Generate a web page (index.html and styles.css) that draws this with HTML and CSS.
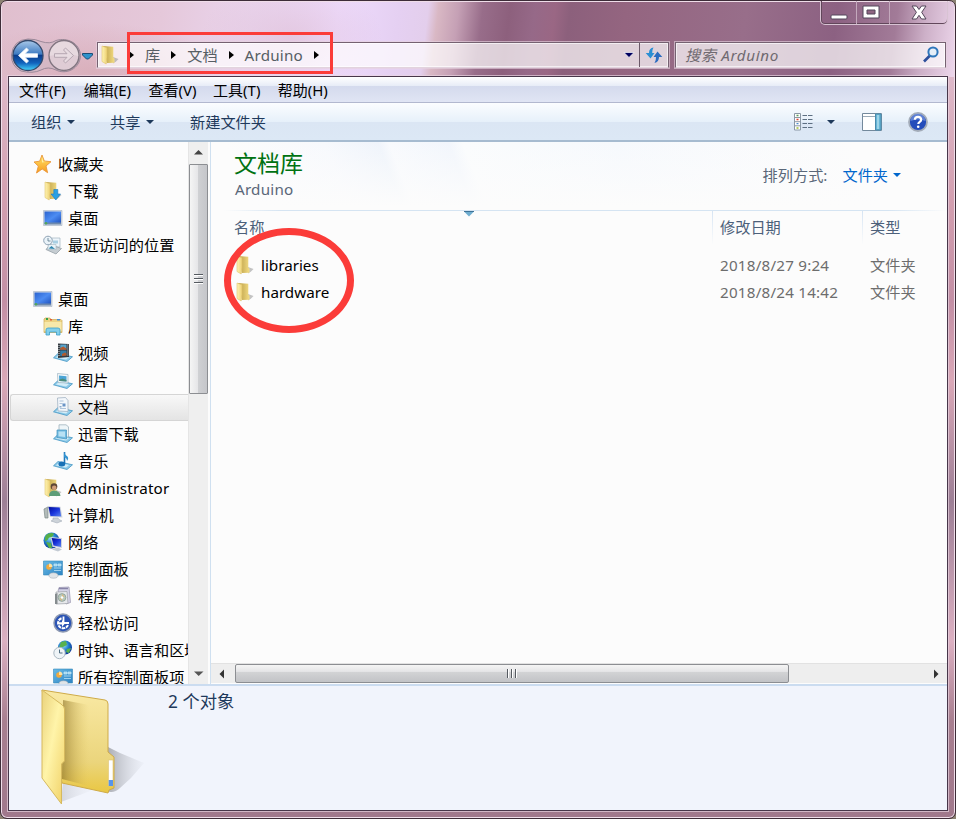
FILE: index.html
```html
<!DOCTYPE html>
<html lang="zh-CN">
<head>
<meta charset="utf-8">
<title>Arduino</title>
<link rel="stylesheet" href="styles.css">
</head>
<body>
<svg class="defs" aria-hidden="true">
  <defs>
    <linearGradient id="gFold" x1="0" x2="1"><stop offset="0" stop-color="#fff4b4"/><stop offset="1" stop-color="#edd173"/></linearGradient>
    <linearGradient id="gBack" x1="0" x2="1"><stop offset="0" stop-color="#b89c48"/><stop offset=".3" stop-color="#c9ae55"/><stop offset="1" stop-color="#f4dd84"/></linearGradient>
    <linearGradient id="gBlue" x1="0" y1="0" x2="1" y2="1"><stop offset="0" stop-color="#2b63cf"/><stop offset=".5" stop-color="#4c8cf2"/><stop offset="1" stop-color="#1e50bd"/></linearGradient>
    <linearGradient id="gNavy" x1="0" y1="0" x2="1" y2="1"><stop offset="0" stop-color="#000b9b"/><stop offset=".5" stop-color="#1a35dc"/><stop offset="1" stop-color="#5c86f0"/></linearGradient>
    <linearGradient id="gStar" x1="0" y1="0" x2="0" y2="1"><stop offset="0" stop-color="#ffe66a"/><stop offset="1" stop-color="#f89a1d"/></linearGradient>
    <linearGradient id="gPanel" x1="0" y1="0" x2="1" y2="1"><stop offset="0" stop-color="#69bbe6"/><stop offset="1" stop-color="#2d83c3"/></linearGradient>
    <radialGradient id="gGlobe" cx=".4" cy=".35" r=".7"><stop offset="0" stop-color="#8fe0f4"/><stop offset=".5" stop-color="#2380ce"/><stop offset="1" stop-color="#082c91"/></radialGradient>
    <linearGradient id="gOrb" x1="0" y1="0" x2="0" y2="1"><stop offset="0" stop-color="#a9c9e9"/><stop offset=".45" stop-color="#3f7cc2"/><stop offset=".5" stop-color="#093c8c"/><stop offset=".75" stop-color="#1263bd"/><stop offset="1" stop-color="#45d6fb"/></linearGradient>
    <linearGradient id="gShade" x1="0" x2="1"><stop offset="0" stop-color="#8d8f96" stop-opacity=".75"/><stop offset="1" stop-color="#c9ccd4" stop-opacity=".1"/></linearGradient>
    <linearGradient id="gSheen" x1="0" y1="0" x2="0" y2="1"><stop offset="0" stop-color="#f9e9a4"/><stop offset=".7" stop-color="#ebd57c"/><stop offset="1" stop-color="#e9c742"/></linearGradient>
    <linearGradient id="gInner" x1="0" x2="1"><stop offset="0" stop-color="#8e742a" stop-opacity=".65"/><stop offset="1" stop-color="#d9bd5c" stop-opacity="0"/></linearGradient>
    <linearGradient id="gFlap" x1="0" y1="0" x2="1" y2="1"><stop offset="0" stop-color="#ead27c"/><stop offset=".45" stop-color="#fff4a9"/><stop offset="1" stop-color="#f0d065"/></linearGradient>

    <symbol id="folder" viewBox="0 0 20 20">
      <path d="M13 12l5.500 2-2.500 2.500-3 2z" fill="#8a8a8a" opacity=".5"/>
      <path d="M3 1l10.300.8v10.700l1.200 1.200v4L7 18z" fill="url(#gBack)"/>
      <path d="M2 1l5 1.800v10L6.200 19 2 16.500z" fill="url(#gFold)" stroke="#dfc36c" stroke-width=".6"/>
    </symbol>
    <symbol id="star" viewBox="0 0 20 20"><path d="M9 1l2.300 6L18 7.700l-5 4.300 1.600 6.700L9.200 15l-5.700 4 1.800-6.900L1 8l5.700-.8z" fill="url(#gStar)" stroke="#e9963a" stroke-width=".9"/><path d="M9 3.500l1.500 4.300H14l-5 .8z" fill="#fff6b5" opacity=".8"/></symbol>
    <symbol id="download" viewBox="0 0 20 20"><use href="#folder"/><path d="M10.800 8.500h4V13h2.700l-4.700 6-4.700-6h2.700z" fill="#2aa0e4" stroke="#1978bd" stroke-width=".6"/></symbol>
    <symbol id="desktop" viewBox="0 0 20 20"><path d="M.5 2.500h18.500v15H.5z" fill="#d5dbe2" stroke="#a6b4c4" stroke-width=".6"/><path d="M1.500 3.500H18v12H1.500z" fill="url(#gBlue)"/><path d="M1.500 14.500H18v2H1.500z" fill="#6d89ad"/><circle cx="3" cy="15.300" r="1.300" fill="#51a55d"/></symbol>
    <symbol id="recent" viewBox="0 0 20 20"><path d="M8 3h9v9H8z" fill="#eef5fa" stroke="#a2b5c0" stroke-width=".7"/><path d="M10 5.500h5v3h-5z" fill="#a8cfe3"/><path d="M3 14.500l4-5 11.500 4-5.500 5.500z" fill="#c6cdd2" stroke="#8d989f" stroke-width=".7"/><path d="M5.500 9.500h7.500v5H4.500z" fill="#e9f3f8" stroke="#a2b5c0" stroke-width=".6"/><path d="M5.500 13.500l3-2.500 3.500 3z" fill="#2f86ae"/><circle cx="5" cy="5.500" r="4.300" fill="#e9f2f8" stroke="#8fa3b4"/><path d="M5 3v3h2.500" fill="none" stroke="#58788c" stroke-width=".8"/></symbol>
    <symbol id="library" viewBox="0 0 20 20"><path d="M1 3l1-1h5l1 1.500L18 3.500l1 1v12H1z" fill="#ecd283" stroke="#cba955" stroke-width=".7"/><path d="M3 2h2v2H3z" fill="#31a34c"/><path d="M7 3h2v1.500H7z" fill="#e35b3b"/><path d="M14 3h3v1.500h-3z" fill="#468dce"/><path d="M1.500 6h17v9h-17z" fill="#f7e8aa"/><path d="M3 19v-5q0-2 2-2h10q2 0 2 2v5h-3.500v-3h-7v3z" fill="#83cfea" stroke="#3b9fcb" stroke-width=".8"/></symbol>
    <symbol id="tray" viewBox="0 0 20 20"><path d="M.5 14.800L5 10.500l14.500 3.300L14 18.500z" fill="#8fcbe9" stroke="#4396c4" stroke-width=".8"/><path d="M3 14.500l3-2.500 10 2-3 2.500z" fill="#d3edf8"/></symbol>
    <symbol id="video" viewBox="0 0 20 20"><use href="#tray"/><path d="M5 .5l11 .5v13L5 15z" fill="#343a40"/><path d="M7.200 1.500h6.300v5H7.200z" fill="#57a3cb"/><path d="M7.200 7.500h6.300V12.500l-6.300.5z" fill="#337ea7"/><path d="M7.200 5l3-1.500 3.300 2v1.200H7.200zM9 11l3-1.500 1.500 1v2L9 13z" fill="#b35a2c"/><path d="M6 2v12M14.800 1.500v12" stroke="#cfd6da" stroke-width="1" stroke-dasharray="1 1"/></symbol>
    <symbol id="picture" viewBox="0 0 20 20"><use href="#tray"/><path d="M4.500 3.500l10.500 1v8.500L5 12.500z" fill="#f5f9fb" stroke="#9bb1c0" stroke-width=".7"/><path d="M6 5.500l7.500.7V11.500L6.300 11z" fill="#4aa4d6"/><path d="M6.300 9.500l3.500-1 3.700 1.500v1.500L6.300 11z" fill="#4c8c7c"/></symbol>
    <symbol id="document" viewBox="0 0 20 20"><use href="#tray"/><path d="M4.500 1l8-.5 2.500 3v11L5 14z" fill="#f3f7fb" stroke="#96a9bb" stroke-width=".7"/><path d="M6.500 4h4M6.500 6.500h3M7 11.500h6" stroke="#9db6d3" stroke-width=".8"/><path d="M9.500 6.500h3v3h-3z" fill="#6a94c6"/><path d="M6.500 9h2v1.500h-2z" fill="#8baccd"/></symbol>
    <symbol id="stack" viewBox="0 0 20 20"><use href="#tray"/><path d="M6 .8h7l2.500 2V13H6z" fill="#eef5f8" stroke="#95aab6" stroke-width=".7"/><path d="M4 6h9.500v9L4 13.500z" fill="#72bbe1" stroke="#4292bd" stroke-width=".7"/><path d="M5.500 7.500H12v5.500l-6.500-.7z" fill="#b8e1f4"/></symbol>
    <symbol id="music" viewBox="0 0 20 20"><use href="#tray"/><path d="M11.500 1v12" stroke="#2277b8" stroke-width="1.600"/><path d="M11 1q1 3 3.500 4.500 1.500 2-.5 4.500 0-3-3-4z" fill="#3293d1"/><ellipse cx="8.800" cy="13" rx="3.400" ry="2.500" fill="#1971b6"/></symbol>
    <symbol id="user" viewBox="0 0 20 20"><use href="#folder"/><circle cx="11" cy="8.500" r="3.300" fill="#5d4636"/><circle cx="11.200" cy="9.800" r="2.300" fill="#cf9d78"/><path d="M6 18q0-5 5-5.500 6 .5 6.500 5.500z" fill="#5d9d78"/></symbol>
    <symbol id="computer" viewBox="0 0 20 20"><path d="M1 4l4-2v11H2z" fill="#b2bbb9" stroke="#7c8988" stroke-width=".7"/><path d="M4.500 1l13 .8 2 10.700L7 12z" fill="#cfd5dd"/><path d="M5.500 2l11.200.6 1.500 9L7.500 11z" fill="url(#gNavy)"/><path d="M10 13h5l1 1.500 3 1.500-5 2-6-2 2-1z" fill="#cdd3d9" stroke="#98a3ae" stroke-width=".5"/></symbol>
    <symbol id="network" viewBox="0 0 20 20"><circle cx="8.500" cy="8.500" r="8" fill="url(#gGlobe)"/><path d="M3 3q4-3 8-1.500-1 4-5 4-1 3-4 4-1-3 1-6.500zM3 10l5 1 1 5-3 0z" fill="#57af47"/><path d="M7.500 5l11.500 1v10L9.500 15z" fill="#cfd5dd"/><path d="M8.700 6l9.300 1v8L10.500 13.500z" fill="url(#gNavy)"/><path d="M12 16h4l3 1.500-4 2-6-2z" fill="#c4cbd4"/></symbol>
    <symbol id="control" viewBox="0 0 20 20"><path d="M.5 2h19v14H.5z" fill="url(#gPanel)" stroke="#388abb" stroke-width=".6"/><circle cx="6" cy="8" r="2.800" fill="#f3aa3d"/><path d="M6 8V4.500A3.400 3.400 0 0 1 9.500 8z" fill="#ffe2a1"/><path d="M11 5h3v2h-3zM15 5h3v2h-3zM11 9h7M11 11.500h7" fill="#9cd4ef" stroke="#c8ebfa" stroke-width=".7"/><ellipse cx="10.500" cy="16.500" rx="4.500" ry="2.700" fill="#dfe4e8" stroke="#9ba5ae" stroke-width=".5"/></symbol>
    <symbol id="program" viewBox="0 0 20 20"><path d="M6 1.500l10-.5 1.500 15.500L13 18 5 5z" fill="#d5d3e6" stroke="#9793ac" stroke-width=".7"/><path d="M6 2.500h9" stroke="#8884a8" stroke-width="1.500"/><path d="M3 6l11-.5 1 12L3 18z" fill="#e6e8eb" stroke="#9ca1a7" stroke-width=".7"/><circle cx="9" cy="11.500" r="3.900" fill="#b9c9bc" stroke="#81948c" stroke-width=".7"/><path d="M9 8l2.500 2.500L9 11.500zM9 15l-2.500-2.500 2.500-1z" fill="#d9b77e"/><circle cx="9" cy="11.500" r="1.300" fill="#fff"/><path d="M2 8l2.500-1v11H2z" fill="#858c8e"/></symbol>
    <symbol id="ease" viewBox="0 0 20 20"><circle cx="10" cy="10" r="9" fill="#2b54b4" stroke="#8d99b2" stroke-width="1.500"/><path d="M10.500 3.500v6.500H16" fill="none" stroke="#fff" stroke-width="1.800"/><path d="M8.500 5.200a5.200 5.200 0 1 0 6.500 7" fill="none" stroke="#fff" stroke-width="2" stroke-dasharray="3.500 .8"/><path d="M6 9.200h3V7l3 3.500L9 14v-2.500H6z" fill="#fff"/></symbol>
    <symbol id="clock" viewBox="0 0 20 20"><circle cx="12" cy="7.500" r="7" fill="url(#gGlobe)"/><path d="M8 2l5-1 1 4-4 2-4 1zM14 9l4-1-2 5-3-1z" fill="#58b14c"/><circle cx="6.500" cy="13" r="5.700" fill="#eff4f7" stroke="#aab8c2"/><path d="M6.500 9.500V13l3 0" fill="none" stroke="#526f83"/></symbol>
  </defs>
</svg>

<div class="window">
  <div class="glow"></div>
  <header class="titlebar">
    <div class="caption">
      <span class="cap min"><svg width="18" height="7"><rect x="1" y="1" width="16" height="4" rx="1" fill="#fff" stroke="#53475a"/></svg></span>
      <span class="cap max"><svg width="18" height="14"><path d="M1 1h16v12H1z" fill="#fff" stroke="#53475a"/><path d="M5 5h8v4H5z" fill="#8f6582" stroke="#53475a"/></svg></span>
      <span class="cap close"><svg width="16" height="15" viewBox="0 0 16 15"><path d="M1 1h4.500L8 4.500 10.500 1H15l-4.300 6.300L15 14h-4.500L8 10.300 5.500 14H1l4.400-6.700z" fill="#fff" stroke="#53475a"/></svg></span>
    </div>
  </header>

  <div class="navrow">
    <svg class="orbs" width="84" height="36" viewBox="0 0 84 36">
      <path d="M19 1Q27 1 32 3.500q9 3 15-1C58-1 71 5 71.500 17.500 71 31 57 37 47 32q-8-4-15 0Q24 36 12 33 2 28 2.500 17 4 2 19 1z" fill="#cdb9c6" fill-opacity=".55" stroke="#9b8999" stroke-width="1"/>
      <circle cx="19" cy="17.500" r="15" fill="url(#gOrb)" stroke="#34496b" stroke-width="1.300"/>
      <path d="M9.500 17.500l8-7.500 2 2-3.500 3.700h12.500v3.600H16l3.500 3.700-2 2z" fill="#fff" stroke="#e8f2fb" stroke-width=".8"/>
      <circle cx="55" cy="17.500" r="15" fill="#dfccd5" stroke="#817681" stroke-width="1.400"/>
      <path d="M40.500 18a14.500 14.500 0 0 1 29 0q-14-4-29 0z" fill="#fff" opacity=".25"/>
      <path d="M64.500 17.500l-8-7.500-2 2 3.500 3.700H45.500v3.600H58l-3.500 3.700 2 2z" fill="#e9dce2" stroke="#b6a7b2" stroke-width="1"/>
      <path d="M73.500 15.500h10v1.500l-4 4h-2l-4-4z" fill="#2f93cc" stroke="#1d4d76" stroke-width="1"/>
    </svg>
    <div class="address">
      <svg class="ico addr-ico"><use href="#folder"/></svg>
      <div class="crumbs">
        <i class="tri"></i><span>库</span><i class="tri"></i><span>文档</span><i class="tri"></i><span class="wide">Arduino</span><i class="tri"></i>
      </div>
      <div class="mark-box"></div>
      <svg class="drop" width="12" height="8"><path d="M1 1.500h10L6 6.500z" fill="#00005f" stroke="#fff" stroke-width=".7"/></svg>
      <div class="refresh"><svg width="18" height="18" viewBox="0 0 18 18"><path d="M8.500 1.500Q4 2 4 7H.7L5.500 12.500l4-5.500H7.200Q7 4 8.500 1.500z" fill="#2b8fd3"/><path d="M9.500 17q4.500-1 4.500-6h3.300L12.500 5.500 8.500 11h2.500q.2 3-1.500 6z" fill="#2c6cc0"/></svg></div>
    </div>
    <div class="search"><span>搜索 Arduino</span>
      <svg width="18" height="18" viewBox="0 0 18 18"><path d="M8 9.500l-6 6" stroke="#2d4f9b" stroke-width="2.600"/><circle cx="11" cy="6" r="4.600" fill="#e5eef8" stroke="#2e76bb" stroke-width="2"/></svg>
    </div>
  </div>

  <div class="client">
    <nav class="menu"><span>文件(F)</span><span>编辑(E)</span><span>查看(V)</span><span>工具(T)</span><span>帮助(H)</span></nav>
    <div class="toolbar">
      <span class="tool t1">组织<i class="down"></i></span>
      <span class="tool t2">共享<i class="down"></i></span>
      <span class="tool t3">新建文件夹</span>
      <span class="tools-right">
        <svg width="20" height="18" viewBox="0 0 20 18"><path d="M.5.500h6v16.500h-6zM.5 4.500h6M.5 8.700h6M.5 12.800h6" fill="#fff" stroke="#8a98a5"/><path d="M2.500 2.500h2" stroke="#5d9c58" stroke-width="1.300"/><path d="M2.500 6.500h2" stroke="#e03f32" stroke-width="1.300"/><path d="M2.500 10.700h2" stroke="#4b8bcf" stroke-width="1.300"/><path d="M2.500 15h2" stroke="#9ebe31" stroke-width="1.300"/><path d="M8.500 2.500H19M8.500 6.500H19M8.500 10.500H19M8.500 14.500H19" stroke="#5d6f82" stroke-dasharray="4.500 1"/></svg>
        <i class="down views"></i>
        <svg class="pane" width="20" height="18" viewBox="0 0 20 18"><path d="M.5.500h19v17H.5z" fill="#fff" stroke="#73899c"/><path d="M1 3.500h13" stroke="#9aaab8"/><path d="M13.500 1H19v16h-5.500z" fill="#67b5d6" stroke="#498bad"/><path d="M15 2h2v14h-2z" fill="#9dd4e8"/></svg>
        <svg class="help" width="20" height="20" viewBox="0 0 20 20"><circle cx="10" cy="10" r="9" fill="#234cbb" stroke="#a3acb9" stroke-width="1.800"/><path d="M2.500 9a7.500 7.500 0 0 1 15 0q-8-3-15 0z" fill="#83a4e6" opacity=".6"/><path d="M6.800 7.800Q7 4.800 10 4.800t3.200 2.800q0 1.500-1.700 2.500-1.200.8-1.200 2" fill="none" stroke="#fff" stroke-width="2.200"/><circle cx="10.200" cy="14.700" r="1.300" fill="#fff"/></svg>
      </span>
    </div>

    <div class="body">
      <aside class="tree">
        <div class="row l0"><svg class="ico"><use href="#star"/></svg>收藏夹</div>
        <div class="row l1"><svg class="ico"><use href="#download"/></svg>下载</div>
        <div class="row l1"><svg class="ico"><use href="#desktop"/></svg>桌面</div>
        <div class="row l1"><svg class="ico"><use href="#recent"/></svg>最近访问的位置</div>
        <div class="row"></div>
        <div class="row l0"><svg class="ico"><use href="#desktop"/></svg>桌面</div>
        <div class="row l1"><svg class="ico"><use href="#library"/></svg>库</div>
        <div class="row l2"><svg class="ico"><use href="#video"/></svg>视频</div>
        <div class="row l2"><svg class="ico"><use href="#picture"/></svg>图片</div>
        <div class="row l2 selected"><svg class="ico"><use href="#document"/></svg>文档</div>
        <div class="row l2"><svg class="ico"><use href="#stack"/></svg>迅雷下载</div>
        <div class="row l2"><svg class="ico"><use href="#music"/></svg>音乐</div>
        <div class="row l1 wide"><svg class="ico"><use href="#user"/></svg>Administrator</div>
        <div class="row l1"><svg class="ico"><use href="#computer"/></svg>计算机</div>
        <div class="row l1"><svg class="ico"><use href="#network"/></svg>网络</div>
        <div class="row l1"><svg class="ico"><use href="#control"/></svg>控制面板</div>
        <div class="row l2"><svg class="ico"><use href="#program"/></svg>程序</div>
        <div class="row l2"><svg class="ico"><use href="#ease"/></svg>轻松访问</div>
        <div class="row l2"><svg class="ico"><use href="#clock"/></svg>时钟、语言和区域</div>
        <div class="row l2"><svg class="ico"><use href="#control"/></svg>所有控制面板项</div>
      </aside>
      <div class="vscroll">
        <svg width="19" height="21"><path d="M5 12.500L9.500 8l4.500 4.500z" fill="#454545"/></svg>
        <div class="vthumb"><b></b><b></b><b></b></div>
        <svg class="vend" width="19" height="21"><path d="M5 8.500h9.500L9.700 13z" fill="#555"/></svg>
      </div>
      <main class="main">
        <div class="libhead">
          <div class="libname"><h1>文档库</h1><p class="wide">Arduino</p></div>
          <div class="arrange"><span>排列方式:</span><a>文件夹<i class="down"></i></a></div>
        </div>
        <div class="cols head"><span class="c1">名称</span><span class="c2">修改日期</span><span class="c3">类型</span>
          <svg class="sort" width="10" height="6"><path d="M0 .5h10L5 5.500z" fill="#6fadd0"/><path d="M0 .5h10" stroke="#3d7297"/></svg>
        </div>
        <div class="files">
          <div class="cols item"><span class="c1"><svg class="ico"><use href="#folder"/></svg>libraries</span><span class="c2 wide">2018/8/27 9:24</span><span class="c3">文件夹</span></div>
          <div class="cols item"><span class="c1"><svg class="ico"><use href="#folder"/></svg>hardware</span><span class="c2 wide">2018/8/24 14:42</span><span class="c3">文件夹</span></div>
        </div>
        <div class="hscroll">
          <svg width="24" height="20"><path d="M13 5.500v9L8.500 10z" fill="#333"/></svg>
          <div class="hthumb"><b></b><b></b><b></b></div>
          <svg class="hend" width="20" height="20"><path d="M7 5.500v9l4.500-4.500z" fill="#333"/></svg>
        </div>
        <div class="mark-ring"></div>
      </main>
    </div>

    <footer class="details">
      <svg width="106" height="120" viewBox="0 0 106 120">
        <path d="M67 61l12 6 24 10-13 15-11 10q-6 6-14 3z" fill="url(#gShade)"/>
        <path d="M22 96l30 8-32 12z" fill="url(#gShade)" opacity=".4"/>
        <path d="M1 4l63 10q3 .5 3 4v48l6 5v31l-5 2-1 3-46-10z" fill="url(#gSheen)" stroke="#cfab49" stroke-width="1"/>
        <path d="M22 14l26 5v81l-27-7z" fill="url(#gInner)"/>
        <path d="M67.500 74H72v26h-4.500z" fill="#fff" stroke="#dfc472" stroke-width=".6"/><path d="M67.700 94H72v6h-4.300z" fill="#5794ea"/>
        <path d="M1 4l19 14q3.500 2.500 3.500 5v52l-3 3v40L1 92z" fill="url(#gFlap)" stroke="#d6b95e" stroke-width="1"/>
      </svg>
      <span>2 个对象</span>
    </footer>
  </div>
</div>
</body>
</html>
```
FILE: styles.css
```css
* { box-sizing: border-box; }
html, body { margin: 0; height: 100%; }
body {
  background: #8b8272;
  font: 15.200px/20px "Noto Sans", "Noto Sans CJK SC", sans-serif;
  color: #000;
  overflow: hidden;
}
.defs { position: absolute; width: 0; height: 0; }
svg { display: block; flex: none; }
i { font-style: normal; }
.wide { letter-spacing: .22px; }

.window {
  position: relative;
  width: 956px;
  height: 819px;
  border: 1px solid #3d2c38;
  border-radius: 7px;
  overflow: hidden;
  display: flex;
  flex-direction: column;
  background: linear-gradient(180deg, #e3c8de 0, #dcb4c4 100px, #d39fb0 200px, #c38fa5 300px, #daa8b8 380px, #9d7f96 500px, #dcb0c2 640px, #a87f90 720px, #a0788c 819px);
  box-shadow: inset 0 0 0 1px #efdde9;
}
.glow {
  position: absolute;
  inset: 1px 1px auto 1px;
  height: 75px;
  background:
    radial-gradient(ellipse 90px 60px at 290px 35px, #dcbbd088, transparent),
    radial-gradient(ellipse 130px 50px at 90px 70px, #d2a0a890, transparent),
    linear-gradient(97deg, #e0bfce 0, #e5c8da 160px, #ead5ee 250px, #eedbfc 335px, #e5d0f2 395px, #e3ceec 424px, #d9b8c4 434px, #c5a0b5 454px, #986d8a 478px, #8d607d 505px, #966988 530px, #9a6784 550px, #8c607c 565px, #946580 620px, #986e8a 740px, #8c6182 830px, #a27b98 890px, #cdb0c8 920px, #ecd5ea 953px);
}
.titlebar { position: relative; height: 37px; display: flex; justify-content: flex-end; padding-right: 7px; }
.caption {
  display: flex; height: 25px; width: 128px; margin-top: -1px;
  border: 1px solid #d8c3d3; border-top: 0; border-radius: 0 0 5px 5px;
  box-shadow: inset 1px 0 #62475b, inset 0 -1px #62475b;
}
.cap { display: flex; align-items: center; justify-content: center; border-right: 1px solid #c4a9bd; }
.min { width: 36px; padding: 10px 0 0 0; }
.max { width: 33px; padding: 0 4px 0 0; }
.close { flex: 1; border: 0; }

.navrow { position: relative; height: 38px; display: flex; padding-left: 8px; }
.orbs { margin-right: 4px; }
.address, .search {
  height: 26px; margin-top: 4px; display: flex; align-items: center;
  background: rgba(255,255,255,.7);
  border: 1px solid #756171; border-bottom-color: #e2d3de;
  box-shadow: inset 0 0 0 1px #ffffffa0, 0 0 0 1px #e6d2dfa0;
}
.address { position: relative; width: 572px; }
.addr-ico { width: 20px; height: 20px; margin-left: 2px; }
.crumbs { display: flex; align-items: center; color: #565e64; padding-left: 9px; margin-top: -1px; }
.tri { width: 0; height: 0; border: 4px solid transparent; border-left: 5px solid #000; border-right: 0; }
.crumbs span { margin: 0 11px 0 11px; }
.drop { margin-left: auto; margin-right: 4px; }
.refresh { width: 29px; height: 24px; border-left: 1px solid #6a5968; display: flex; align-items: center; justify-content: center; }
.mark-box { position: absolute; left: 29px; top: -11px; width: 206px; height: 42px; border: 3px solid #fb3c39; }
.search { width: 271px; margin-left: 6px; padding: 0 5px 0 9px; justify-content: space-between; color: #706a70; font-style: italic; }
.search span { letter-spacing: .65px; }

.client {
  position: relative; margin: 0 7px 0 7px; height: 735px;
  border: 1px solid #47364a; outline: 1px solid #ead6e2aa;
  display: flex; flex-direction: column; background: #fcfcfc;
}
.menu {
  height: 26px; display: flex; align-items: center; gap: 15.700px; padding-left: 10px; flex: none;
  background: linear-gradient(#fff 0, #e7ecf7 9px, #d4daed 9px, #e0e5f4 100%);
  border-bottom: 1px solid #b2b8cf;
}
.menu span { width: 49px; white-space: nowrap; font-size: 15px; }
.toolbar {
  height: 39px; display: flex; align-items: center; flex: none; color: #1e395b;
  background: linear-gradient(#fbfdff 0, #e6f0fa 19px, #dbe6f4 19px, #dce8f5 100%);
  border-bottom: 2px solid #a6bbd0;
}
.tool { display: flex; align-items: center; }
.t1 { margin-left: 22px; width: 79px; }
.t2 { width: 80px; }
.down { width: 0; height: 0; border: 4px solid transparent; border-top: 4px solid currentColor; border-bottom: 0; margin-left: 6px; }
.tools-right { margin-left: auto; display: flex; align-items: center; margin-right: 19px; }
.views { margin-left: 13px; }
.pane { margin-left: 27px; }
.help { margin-left: 26px; }

.body { flex: none; height: 542px; display: flex; }
.tree { width: 179px; padding-top: 8px; overflow: hidden; }
.row { height: 27px; display: flex; align-items: center; white-space: nowrap; }
.ico { width: 20px; height: 20px; }
.row .ico { margin-right: 5px; }
.l0 { padding-left: 24px; }
.l1 { padding-left: 34px; }
.l2 { padding-left: 44px; }
.selected {
  margin: 1px 0 -1px 1px; border: 1px solid #d5d5d5; border-right: 0;
  padding: 0 0 2px 42px; border-radius: 3px 0 0 3px; background: linear-gradient(#f8f8f8, #e4e4e4);
}
.vscroll { width: 20px; background: #efefef; display: flex; flex-direction: column; border-left: 1px solid #e5e5e5; }
.vthumb {
  margin-top: 1px; height: 230px; width: 19px; border: 1px solid #8c8e92; border-radius: 1px;
  background: linear-gradient(90deg, #f5f5f5, #e6e6e8 45%, #cfd0d3 50%, #c5c6ca);
  display: flex; flex-direction: column; align-items: center; justify-content: center; gap: 2px;
}
.vthumb b { width: 9px; height: 2px; border-top: 1px solid #555a60; background: #fff; }
.vend { margin-top: auto; }

.main { position: relative; flex: 1; min-width: 0; margin-left: 2px; border-left: 1px solid #cfe0f0; display: flex; flex-direction: column; }
.libhead {
  height: 68px; flex: none; display: flex; justify-content: space-between; padding: 6px 46px 0 23px;
  background:
    linear-gradient(transparent, #fcfcfc 95%),
    linear-gradient(68deg, #fcfcfc 38px, #f7f9fd 130px, #eff4fb 180px, #f8fafd 190px, #f2f6fc 245px, #fafcfd 258px, #f6f9fd 400px, #fcfcfc 620px);
}
h1 { margin: 0; font-size: 23px; line-height: 30px; font-weight: 400; color: #007212; }
p { margin: 0 0 0 1px; line-height: 23px; color: #5a6779; }
.arrange { display: flex; padding-top: 17px; color: #5a6779; }
.arrange a { display: flex; align-items: center; height: 20px; color: #0066cc; margin-left: 15px; }
.arrange .down { margin-left: 5px; }
.cols { display: flex; align-items: center; }
.c1 { display: flex; align-items: center; }
.c2 { width: 150px; }
.head { position: relative; height: 34px; margin-left: 13px; flex: none; color: #4c607a; }
.head::before { content: ""; position: absolute; inset: 0 0 auto; height: 1px; background: linear-gradient(90deg, transparent, #d5e4f2 8%, #d5e4f2 92%, transparent); }
.head .c1 { width: 488px; padding-left: 10px; }
.head .c2, .head .c3 { height: 34px; line-height: 34px; padding-left: 7px; border-left: 1px solid; border-image: linear-gradient(#d4e3f3, transparent) 1; }
.head .c3 { width: 80px; }
.sort { position: absolute; left: 240px; top: 1px; }
.files { flex: 1; padding: 7px 0 0 24px; }
.item { height: 27px; color: #6d6d6d; }
.item .c1 { color: #000; width: 485px; }
.item .ico { margin: 0 6px 0 0; }
.hscroll { height: 20px; flex: none; background: #eee; display: flex; align-items: center; border-top: 1px solid #e2e2e2; margin-bottom: 1px; }
.hthumb {
  width: 554px; height: 19px; border: 1px solid #8c8e92; border-radius: 2px;
  background: linear-gradient(#f5f5f5, #e5e5e7 38%, #d2d3d5 42%, #c2c3c6);
  display: flex; align-items: center; justify-content: center; gap: 2px;
}
.hthumb b { width: 2px; height: 9px; border-left: 1px solid #555a60; background: #fff; }
.hend { margin-left: auto; }
.mark-ring { position: absolute; left: 12.500px; top: 85.500px; width: 130px; height: 105px; border: 7px solid #fb3c39; border-radius: 50%; }

.details {
  flex: 1; display: flex; background: #f1f4fc; border-top: 2px solid #cbdcf0;
  padding-left: 32px; color: #1e395b; font-size: 17.300px;
}
.details span { margin: 5px 0 0 21px; line-height: 22px; }
```
